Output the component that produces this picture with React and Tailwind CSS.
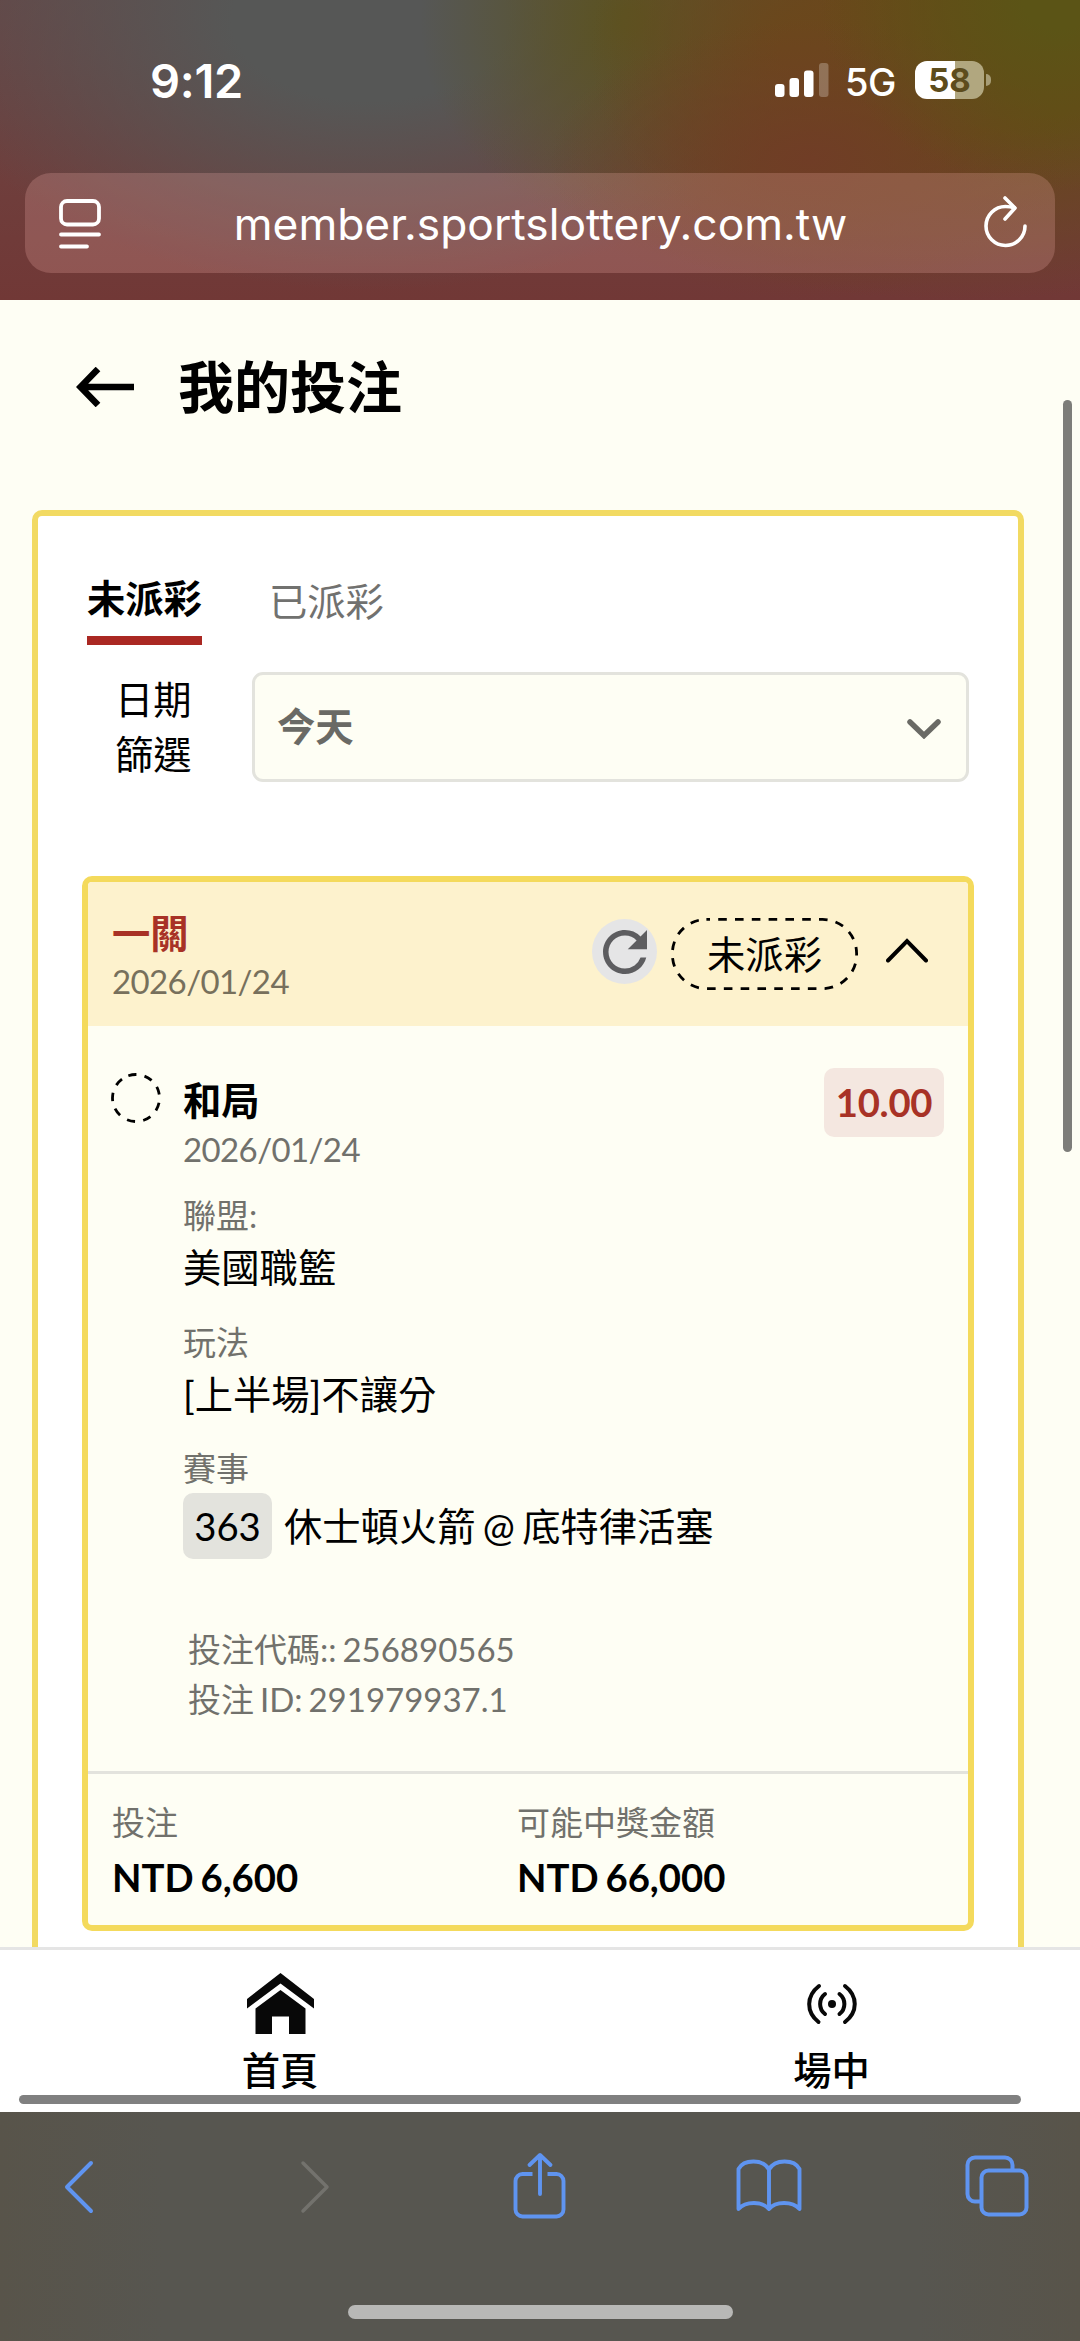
import { MdRefresh } from "react-icons/md";

const fields = [
  { label: "聯盟:", value: "美國職籃" },
  { label: "玩法", value: "[上半場]不讓分" },
];

const StatusBar = () => (
  <div className="flex h-[173px] items-start justify-between pl-[150px] pr-[89px]">
    <span className="mt-[51px] text-[47px] leading-[60px] font-semibold tracking-[-0.3px]">
      9:12
    </span>
    <div className="mt-[61px] flex h-[38px] items-center">
      <svg className="h-[34px] w-[54px]" viewBox="0 0 54 34" fill="currentColor">
        <rect x="0" y="21" width="9.5" height="13" rx="3" />
        <rect x="14.5" y="15" width="9.5" height="19" rx="3" />
        <rect x="29" y="7.5" width="9.5" height="26.5" rx="3" />
        <rect x="44" y="0" width="9.5" height="34" rx="3" opacity="0.25" />
      </svg>
      <span className="mt-[3px] ml-[16px] w-[52px] text-[38px] leading-[38px] font-medium tracking-[-0.5px]">
        5G
      </span>
      <div className="ml-[18px] flex h-[38px] w-[69px] items-center justify-center rounded-[12px] bg-[linear-gradient(90deg,#fff_58%,#b1a77f_58%)] pt-[2px] text-[33px] font-bold text-[#5d4c1c]">
        58
      </div>
      <div className="ml-[2px] h-[12px] w-[5px] rounded-r-full bg-[#a79d76]" />
    </div>
  </div>
);

const AddressBar = () => (
  <div className="mx-[25px] flex h-[100px] items-center justify-between rounded-[26px] bg-[#ffbcb4]/22 pr-[27px] pl-[34px]">
    <svg className="mt-[2px] h-[50px] w-[42px]" viewBox="0 0 42 50" fill="none" stroke="currentColor" strokeWidth="3.8" strokeLinecap="round">
      <rect x="2" y="2" width="38" height="23.5" rx="6" />
      <path d="M2 35.5h38M2 47.5h26" />
    </svg>
    <span className="mt-px mr-[4px] text-[44.3px] leading-[60px]">member.sportslottery.com.tw</span>
    <svg className="mb-[2px] h-[52px] w-[44px]" viewBox="0 0 44 52" fill="none" stroke="currentColor" strokeWidth="3.6" strokeLinecap="round" strokeLinejoin="round">
      <path d="M41 30a19.500 19.500 0 1 1-19.500-19.500c3 0 6 .4 9 1.500" />
      <path d="M21 2l10 10-10 11" />
    </svg>
  </div>
);

const BetHeader = () => (
  <div className="flex h-[144px] items-start bg-[#fdf2cd] pl-[24px]">
    <div className="mt-[23px] flex-1">
      <p className="text-[38.3px] leading-[56px] font-bold text-[#a83226]">一關</p>
      <p className="text-[33px] leading-[41px] tracking-[-0.6px] text-[#77705c]">2026/01/24</p>
    </div>
    <div className="mt-[37px] flex size-[65px] items-center justify-center rounded-full bg-[#e5e5e6] text-[#5d5d60]">
      <MdRefresh className="size-[66px] shrink-0" />
    </div>
    <div className="relative mt-[36px] ml-[14px] flex h-[72px] w-[187px] items-center justify-center">
      <svg className="absolute inset-0 h-full w-full" viewBox="0 0 187 72" fill="none" stroke="#000" strokeWidth="2.8">
        <rect x="1.4" y="1.4" width="184.2" height="69.2" rx="34" strokeDasharray="8.6 8.2" strokeDashoffset="5" />
      </svg>
      <span className="text-[38.3px] leading-[56px]">未派彩</span>
    </div>
    <svg className="mt-[56px] mr-[40px] ml-[28px] h-[25px] w-[42px]" viewBox="0 0 42 25" fill="none" stroke="#000" strokeWidth="4" strokeLinecap="round">
      <path d="M2 22.5L21 3l19 19.5" />
    </svg>
  </div>
);

const BetDetail = () => (
  <div className="flex h-[745px] items-start pl-[23px]">
    <svg className="mt-[47px] size-[50px]" viewBox="0 0 50 50" fill="none" stroke="#000" strokeWidth="2.8">
      <circle cx="25" cy="25" r="23.5" strokeDasharray="8.2 8.207" transform="rotate(-109 25 25)" />
    </svg>
    <div className="ml-[22px] flex-1">
      <p className="mt-[46px] text-[38.3px] leading-[56px] font-bold">和局</p>
      <p className="text-[33px] leading-[43px] tracking-[-0.6px] text-[#71716c]">2026/01/24</p>
      {fields.map((field) => (
        <div key={field.label} className="mb-[23px] first-of-type:mt-[20px]">
          <p className="text-[33px] leading-[48px] text-[#71716c]">{field.label}</p>
          <p className="text-[38.3px] leading-[56px]">{field.value}</p>
        </div>
      ))}
      <p className="mt-[-1px] text-[33px] leading-[48px] text-[#71716c]">賽事</p>
      <div className="mt-px flex items-center text-[38.3px] leading-[56px]">
        <span className="flex h-[66px] w-[89px] items-center justify-center rounded-[10px] bg-[#e3e3dd]">
          363
        </span>
        <span className="ml-[12px]">休士頓火箭 @ 底特律活塞</span>
      </div>
      <div className="mt-[66px] ml-[5px] text-[33px] leading-[49.5px] text-[#71716c]">
        <p>投注代碼:: 256890565</p>
        <p>投注 ID: 291979937.1</p>
      </div>
    </div>
    <span className="mt-[42px] mr-[24px] flex h-[69px] w-[120px] items-center justify-center rounded-[10px] bg-[#f4e7e0] text-[38.3px] font-bold tracking-[-0.3px] text-[#a83226]">
      10.00
    </span>
  </div>
);

const Amount = ({ label, value }) => (
  <div>
    <p className="text-[33px] leading-[48px] text-[#71716c]">{label}</p>
    <p className="mt-[2px] text-[38.3px] leading-[58px] font-bold">{value}</p>
  </div>
);

const BottomNav = () => (
  <nav className="relative flex h-[165px] border-t-3 border-[#e5e5e5] bg-white text-[38.3px] leading-[56px] font-medium">
    <div className="flex w-[560px] shrink-0 flex-col items-center pt-[23px]">
      <svg className="h-[61px] w-[67px]" viewBox="0 0 67 61" fill="#080808">
        <path d="M33.5 0L67 26v9.5L33.5 10.500 0 35.500v-9.500z" />
        <path d="M33.5 17L58.5 35.5V61H42V43.5H25V61H8.5V35.5z" />
      </svg>
      <span className="mt-[8px]">首頁</span>
    </div>
    <div className="flex w-[543px] shrink-0 flex-col items-center pt-[33px]">
      <svg className="h-[42px] w-[50px]" viewBox="0 0 50 42" fill="none" stroke="#080808" strokeWidth="4" strokeLinecap="round">
        <path d="M12 3C-1 13-1 29 11.5 39M38 3c13 10 13 26 0 36M18 11c-6.500 5-6.500 15 0 20M32.500 11c6.500 5 6.500 15 0 20" />
        <circle cx="25" cy="21" r="4" fill="#080808" stroke="none" />
      </svg>
      <span className="mt-[17px]">場中</span>
    </div>
    <div className="absolute bottom-[8px] left-[19px] h-[9px] w-[1002px] rounded-full bg-[#808080]" />
  </nav>
);

const Toolbar = () => (
  <div className="h-[229px] bg-[linear-gradient(90deg,#58544a,#575650_15%,#575650_85%,#58544a)] text-[#5f94f0]">
    <div className="flex h-[193px] items-start pt-[39px] pl-[63px]">
      <svg className="mt-[9px] h-[54px] w-[32px]" viewBox="0 0 32 54" fill="none" stroke="currentColor" strokeWidth="4" strokeLinecap="round" strokeLinejoin="round">
        <path d="M28 3L4 27l24 24" />
      </svg>
      <svg className="mt-[9px] ml-[204px] h-[54px] w-[32px] text-[#73726d]" viewBox="0 0 32 54" fill="none" stroke="currentColor" strokeWidth="3.5" strokeLinecap="round" strokeLinejoin="round">
        <path d="M4 3l24 24L4 51" />
      </svg>
      <svg className="mt-px ml-[182px] h-[68px] w-[54px]" viewBox="0 0 54 68" fill="none" stroke="currentColor" strokeWidth="3.9" strokeLinecap="round" strokeLinejoin="round">
        <path d="M19.5 22H9.500a7 7 0 0 0-7 7v28.500a7 7 0 0 0 7 7h34a7 7 0 0 0 7-7V29a7 7 0 0 0-7-7h-9" strokeLinecap="butt" />
        <path d="M27 42V4M16.5 13L27 3l10.500 10" />
      </svg>
      <svg className="mt-[7px] ml-[169px] h-[60px] w-[66px]" viewBox="0 0 66 60" fill="none" stroke="currentColor" strokeWidth="3.9" strokeLinejoin="round">
        <path d="M33 11.500C27 1 8 1 2.500 11v40c7-8 24-8 30.500 0 6.500-8 23.500-8 30.500 0V11C58 1 39 1 33 11.500zV51" />
      </svg>
      <svg className="mt-[4px] ml-[163px] h-[62px] w-[64px]" viewBox="0 0 64 62" fill="none" stroke="currentColor" strokeWidth="4">
        <path d="M16 46.500H10a7.500 7.500 0 0 1-7.500-7.500V10A7.500 7.500 0 0 1 10 2.500h30a7.500 7.500 0 0 1 7.500 7.500v5" />
        <rect x="16.500" y="15.500" width="45" height="44" rx="7" />
      </svg>
    </div>
    <div className="mx-auto h-[14px] w-[385px] rounded-full bg-[#b8b8b6]" />
  </div>
);

const App = () => {
  return (
    <div className="flex h-[2341px] w-[1080px] flex-col overflow-hidden bg-[#fefef4] font-[Lato,'Noto_Sans_CJK_TC',sans-serif] text-black">
      <header className="h-[300px] bg-[radial-gradient(ellipse_240px_190px_at_1060px_0px,#5b5416_15%,#5b541600_100%),radial-gradient(ellipse_260px_140px_at_810px_160px,#703d26_0%,#703d2600_100%),radial-gradient(ellipse_210px_200px_at_800px_50px,#6b471c_10%,#6b471c00_100%),radial-gradient(ellipse_210px_210px_at_630px_20px,#5b5322_5%,#5b532200_100%),radial-gradient(ellipse_460px_270px_at_370px_20px,#565756_30%,#56575600_100%),radial-gradient(ellipse_520px_240px_at_960px_60px,#674818_30%,#67481800_100%),linear-gradient(180deg,#664646,#6f3e3c_60%,#713836)] bg-no-repeat font-[Inter,sans-serif] text-white">
        <StatusBar />
        <AddressBar />
      </header>

      <main className="relative h-[1647px] overflow-hidden [word-spacing:-2.5px]">
        <div className="flex h-[210px] items-start pt-[66px] pl-[76px]">
          <svg className="mt-[1px] h-[40px] w-[58px]" viewBox="0 0 58 40" fill="none" stroke="#000" strokeWidth="6.5">
            <path d="M58 20H5M22 2L4.500 20 22 38" />
          </svg>
          <h1 className="mt-[-20px] ml-[44px] text-[56px] leading-[82px] font-bold">我的投注</h1>
        </div>

        <section className="mr-[56px] ml-[32px] h-[1500px] rounded-[10px] border-6 border-[#f2da62] bg-white">
          <div className="flex h-[156px] pt-[54px] pl-[49px] text-[38.3px] leading-[56px]">
            <div className="h-[75px] border-b-9 border-[#aa2822] font-bold">未派彩</div>
            <div className="mt-[3px] ml-[67px] text-[#71716f]">已派彩</div>
          </div>

          <div className="flex h-[204px] items-start pr-[49px]">
            <p className="ml-[77px] w-[78px] text-[38.3px] leading-[55px]">日期篩選</p>
            <div className="ml-[59px] flex h-[110px] flex-1 items-center justify-between rounded-[11px] border-3 border-[#e3e3dd] bg-[#fefef4] pr-[25px] pl-[22px] text-[38.3px] font-bold text-[#6a6a65]">
              今天
              <svg className="mt-[4px] h-[20px] w-[34px]" viewBox="0 0 34 20" fill="none" stroke="currentColor" strokeWidth="5.5" strokeLinecap="round">
                <path d="M3 3l14 13.5L31 3" />
              </svg>
            </div>
          </div>

          <article className="mr-[44px] ml-[44px] h-[1055px] overflow-hidden rounded-[10px] border-6 border-[#f4da5c] bg-[#fefef4]">
            <BetHeader />
            <BetDetail />
            <div className="flex border-t-3 border-[#e3e3dd] pt-[24px] pl-[24px]">
              <div className="w-[405px]">
                <Amount label="投注" value="NTD 6,600" />
              </div>
              <Amount label="可能中獎金額" value="NTD 66,000" />
            </div>
          </article>
        </section>

        <div className="absolute top-[100px] right-[8px] h-[752px] w-[9px] rounded-full bg-[#7d7d79]" />
      </main>

      <BottomNav />
      <Toolbar />
    </div>
  );
};

export default App;
